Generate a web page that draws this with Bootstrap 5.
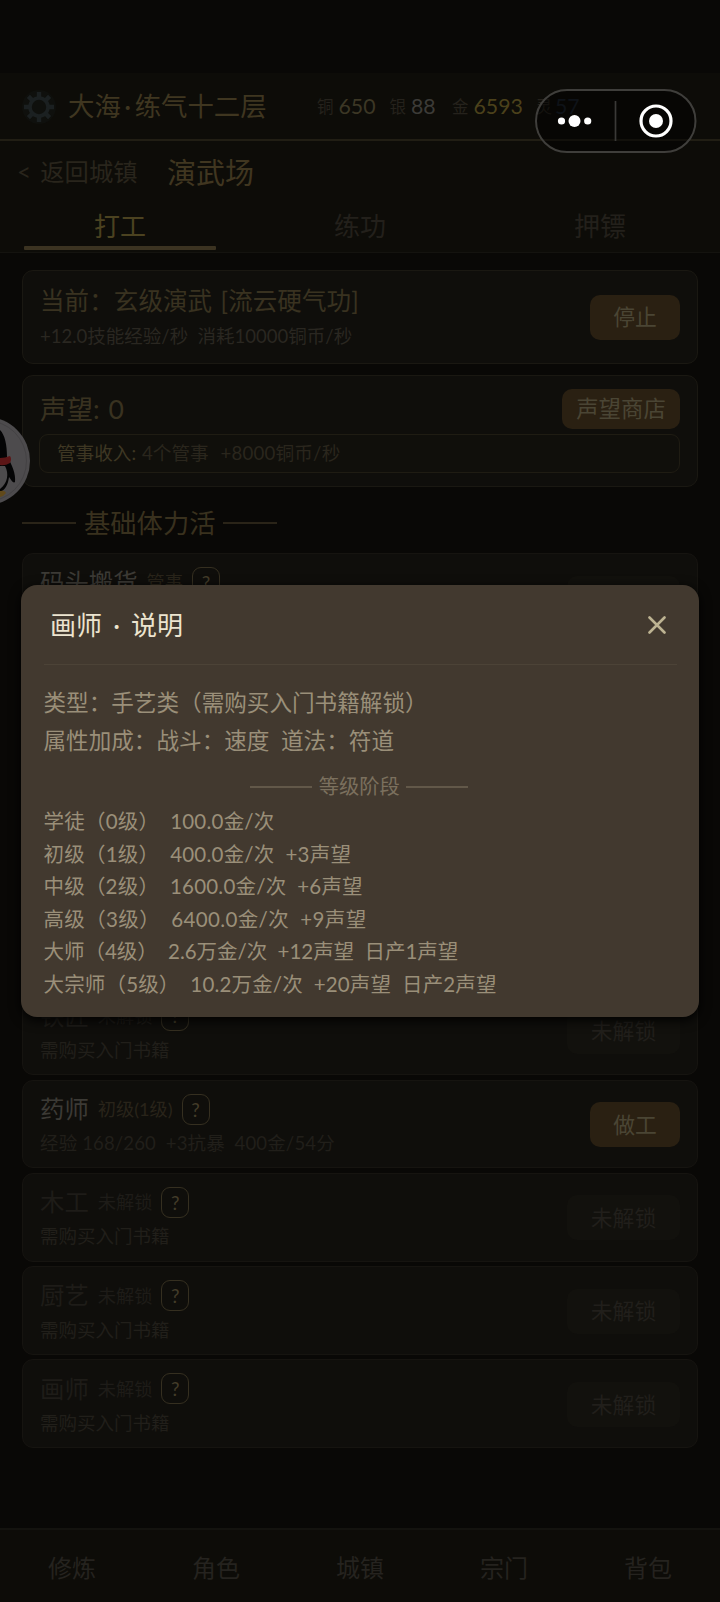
<!DOCTYPE html>
<html lang="zh-CN">
<head>
<meta charset="utf-8">
<meta name="viewport" content="width=device-width, initial-scale=1">
<title>演武场</title>
<link href="https://cdn.jsdelivr.net/npm/bootstrap@5.3.0/dist/css/bootstrap.min.css" rel="stylesheet">
<style>
body{background:#090806;font-family:Lato,"Noto Sans CJK SC",sans-serif;line-height:1;color:#25221d;width:720px;height:1602px;overflow:hidden}
.screen{height:1602px;padding-top:73px}
.t{white-space:pre}
.topzone{background:#0d0c08;height:180px;border-bottom:1px solid #14130f}
.status{height:68px;border-bottom:2px solid #211e14;padding:1px 0 0 22px}
.hero{font-size:26.4px;color:#3f3620;margin-left:12px;width:249px}
.hero .mid{margin:0 3.5px}
.coin{font-size:16.5px;color:#25221c;padding-top:1px}
.coin b{font-weight:400;font-size:21.3px;margin-left:5px;display:inline-block}
.titlerow{height:62px;padding:0 18px 0 17px}
.back{font-size:24.3px;color:#29251c;width:150px;word-spacing:3px}
.place{font-size:29px;color:#403620}
.tabs{height:49px}
.tabs>div{width:240px;font-size:26px;color:#23201b;padding-top:10px;height:47px}
.tabs>.on{color:#4b4220;position:relative}
.tabs>.on::after{content:"";position:absolute;left:24px;right:24px;bottom:0;height:4px;background:#3b3321;border-radius:1px}
.panel{background:#0f0e0b;border:1px solid #1a1812;border-radius:11px;margin:0 22px;padding:0 17px;width:676px}
.goldbtn{background:#2a2012;color:#4a4534;border-radius:10px;height:45px;width:90px;font-size:21.8px}
.offbtn{background:#12110d;color:#211f1b;border-radius:10px;height:45px;width:113px;font-size:21.8px}
.sub{font-size:18.5px;color:#2a2721}
.income{height:39px;border:1px solid #1f1c13;border-radius:9px;margin:5px 0 0 -1px;padding-left:17px;background:#100f0b;font-size:18.6px;color:#2a261d}
.heading{height:66px;margin:0 22px;font-size:26.3px;color:#39311e;padding-top:6px}
.heading i{width:54px;height:2px;background:#2a2418}
.job{height:88.800px;margin-bottom:4.500px;padding-top:13px;border-color:#161410}
.job .name{font-size:24.4px;color:#3c3a35}
.job .tag{font-size:18.2px;color:#29241a;margin-left:9px}
.job .sub{color:#211f1a;margin-top:9.500px}
.job.locked .name{color:#1e1c18}
.job.locked .tag{color:#1e1c18}
.job .goldbtn,.job .offbtn{margin-top:8.500px}
.q{width:28px;height:31px;border:1.5px solid #352f20;border-radius:9px;font-size:19px;color:#433c29;margin-left:9px}
.bottomnav{position:absolute;left:0;top:1528px;width:720px;height:74px;background:#0d0c08;border-top:2px solid #14130f;font-size:24px;color:#25231f;padding-top:4px}
.dialogbox{position:absolute;left:21px;top:585px;width:678px;height:431.500px;background:#42392f;border-radius:16px;padding:0 22px 0 22.500px;box-shadow:0 3px 12px #000;color:#9a8f79}
.dialoghead{height:80px;border-bottom:1px solid #4c4337;padding:0 11px 0 6.500px}
.dialoghead h1{font-size:26px;color:#ece4cf;line-height:1;word-spacing:4.500px}
.info{font-size:22.6px;height:38px}
.levels{font-size:20.5px;height:32.5px}
.ls-a{letter-spacing:.22px}.ls-b{letter-spacing:.2px}.ls-c{letter-spacing:.36px}.ls-d{letter-spacing:-.04px}.ls-e{letter-spacing:.16px}
.stage{font-size:20.3px;color:#7b705e;height:43px;padding:10px 2px 0 0}
.stage i{width:62px;height:2px;background:#625849}
.stage span{margin:0 6.500px}
.capsule{position:absolute;left:535px;top:89px}
.mascot{position:absolute;left:0;top:415px}
</style>
</head>
<body>
<div class="screen">
  <header class="topzone">
    <div class="status d-flex align-items-center">
      <svg width="34" height="34" viewBox="-17 -17 34 34"><circle r="17" fill="#0f100d"/><g stroke="#1b2021" fill="none"><circle r="9" stroke-width="3.600"/><path stroke-width="4.400" d="M0-15V-10M0 15V10M-15 0H-10M15 0H10M-10.6-10.6-7-7M10.6 10.6 7 7M-10.6 10.6-7 7M10.6-10.6 7-7"/></g></svg>
      <div class="hero t">大海<span class="mid">·</span>练气十二层</div>
      <div class="coin t d-flex align-items-center"><span>铜</span><b style="color:#3c3725;width:51px">650</b><span>银</span><b style="color:#3c3b37;width:41px">88</b><span>金</span><b style="color:#4b411b;width:62px">6593</b><span>灵</span><b style="color:#1b222c;margin-left:3px">57</b></div>
    </div>
    <div class="titlerow d-flex align-items-center"><div class="back t">&lt; 返回城镇</div><div class="place t">演武场</div></div>
    <div class="tabs d-flex text-center"><div class="on">打工</div><div>练功</div><div>押镖</div></div>
  </header>

  <section class="panel d-flex align-items-center justify-content-between" style="height:94px;margin-top:17px">
    <div><div class="t" style="font-size:24.5px;color:#393220;word-spacing:2px;letter-spacing:.1px">当前：玄级演武 [流云硬气功]</div><div class="sub t" style="margin-top:13px">+12.0技能经验/秒  消耗10000铜币/秒</div></div>
    <div class="goldbtn d-flex align-items-center justify-content-center">停止</div>
  </section>
  <section class="panel" style="height:112px;margin-top:11px;padding-top:13px">
    <div class="d-flex align-items-center justify-content-between"><div class="t" style="font-size:26.500px;color:#393220;word-spacing:2px">声望: 0</div><div class="goldbtn d-flex align-items-center justify-content-center" style="width:118px;height:40px;font-size:22.400px">声望商店</div></div>
    <div class="income t d-flex align-items-center"><span style="color:#3e3723">管事收入:</span><span style="margin-left:6px">4个管事</span><span style="margin-left:12px;letter-spacing:.2px">+8000铜币/秒</span></div>
  </section>
  <div class="heading d-flex align-items-center"><i></i><span style="margin:0 8px">基础体力活</span><i></i></div>

  <section class="panel job d-flex align-items-start justify-content-between" style="margin-bottom:344.500px">
    <div><div class="d-flex align-items-center"><span class="name t">码头搬货</span><span class="tag">管事</span><span class="q d-flex align-items-center justify-content-center">?</span></div></div>
    <div class="offbtn"></div>
  </section>

  <section class="panel job locked d-flex align-items-start justify-content-between">
    <div><div class="d-flex align-items-center"><span class="name t">铁匠</span><span class="tag">未解锁</span><span class="q d-flex align-items-center justify-content-center">?</span></div><div class="sub t">需购买入门书籍</div></div>
    <div class="offbtn d-flex align-items-center justify-content-center">未解锁</div>
  </section>
  <section class="panel job d-flex align-items-start justify-content-between">
    <div><div class="d-flex align-items-center"><span class="name t">药师</span><span class="tag">初级(1级)</span><span class="q d-flex align-items-center justify-content-center">?</span></div><div class="sub t" style="letter-spacing:.15px">经验 168/260  +3抗暴  400金/54分</div></div>
    <div class="goldbtn d-flex align-items-center justify-content-center">做工</div>
  </section>
  <section class="panel job locked d-flex align-items-start justify-content-between">
    <div><div class="d-flex align-items-center"><span class="name t">木工</span><span class="tag">未解锁</span><span class="q d-flex align-items-center justify-content-center">?</span></div><div class="sub t">需购买入门书籍</div></div>
    <div class="offbtn d-flex align-items-center justify-content-center">未解锁</div>
  </section>
  <section class="panel job locked d-flex align-items-start justify-content-between">
    <div><div class="d-flex align-items-center"><span class="name t">厨艺</span><span class="tag">未解锁</span><span class="q d-flex align-items-center justify-content-center">?</span></div><div class="sub t">需购买入门书籍</div></div>
    <div class="offbtn d-flex align-items-center justify-content-center">未解锁</div>
  </section>
  <section class="panel job locked d-flex align-items-start justify-content-between">
    <div><div class="d-flex align-items-center"><span class="name t">画师</span><span class="tag">未解锁</span><span class="q d-flex align-items-center justify-content-center">?</span></div><div class="sub t">需购买入门书籍</div></div>
    <div class="offbtn d-flex align-items-center justify-content-center">未解锁</div>
  </section>
</div>

<nav class="bottomnav d-flex align-items-center text-center"><div class="col">修炼</div><div class="col">角色</div><div class="col">城镇</div><div class="col">宗门</div><div class="col">背包</div></nav>

<svg class="mascot" width="32" height="92" viewBox="0 0 32 92">
  <circle cx="-14" cy="46" r="44" fill="#4d4b4d"/><circle cx="-14" cy="46" r="40.5" fill="none" stroke="#444244"/>
  <path d="M0 15C5 20 7 30 7 42C12 49 16 59 15 67C13 69 10 63 9 62C8 70 5 75 0 77Z" fill="#040405"/>
  <path d="M0 51H5C9 58 8 68 0 74Z" fill="#4d4b4d"/>
  <path d="M0 43Q5 43 10 41Q12 44 10 48Q5 51 0 50Z" fill="#5c1516"/>
  <path d="M0 76Q5 75 6 78Q4 81 0 82Z" fill="#61491a"/>
</svg>

<svg class="capsule" width="162" height="65" viewBox="0 0 162 65">
  <rect x="1" y="1" width="159.500" height="62" rx="31" fill="#000" fill-opacity=".45" stroke="#3f3e3b" stroke-width="2"/>
  <path d="M80.500 12V52" stroke="#3a3937" stroke-width="1.700"/>
  <g fill="#fff"><circle cx="26.500" cy="32" r="3.600"/><circle cx="39.500" cy="32" r="6"/><circle cx="52.700" cy="32" r="3.600"/><circle cx="121" cy="32" r="7"/></g>
  <circle cx="121" cy="32" r="15" fill="none" stroke="#fff" stroke-width="3.200"/>
</svg>

<div class="dialogbox">
  <div class="dialoghead d-flex align-items-center justify-content-between"><h1 class="t m-0 fw-normal">画师 · 说明</h1><svg width="18" height="18" viewBox="0 0 18 18"><path d="M1.500 1.500 16.500 16.500M16.500 1.500 1.500 16.500" stroke="#bdb392" stroke-width="2.600" stroke-linecap="round"/></svg></div>
  <div style="height:19px"></div>
  <div class="info t d-flex align-items-center">类型：手艺类（需购买入门书籍解锁）</div>
  <div class="info t d-flex align-items-center">属性加成：战斗：速度  道法：符道</div>
  <div class="stage d-flex align-items-center justify-content-center"><i></i><span>等级阶段</span><i></i></div>
  <div style="height:2px"></div>
  <div class="levels ls-a t d-flex align-items-center">学徒（0级）  100.0金/次</div>
  <div class="levels ls-a t d-flex align-items-center">初级（1级）  400.0金/次  +3声望</div>
  <div class="levels ls-b t d-flex align-items-center">中级（2级）  1600.0金/次  +6声望</div>
  <div class="levels ls-c t d-flex align-items-center">高级（3级）  6400.0金/次  +9声望</div>
  <div class="levels ls-d t d-flex align-items-center">大师（4级）  2.6万金/次  +12声望  日产1声望</div>
  <div class="levels ls-e t d-flex align-items-center">大宗师（5级）  10.2万金/次  +20声望  日产2声望</div>
</div>
<script src="https://cdn.jsdelivr.net/npm/bootstrap@5.3.0/dist/js/bootstrap.bundle.min.js"></script>
</body>
</html>
